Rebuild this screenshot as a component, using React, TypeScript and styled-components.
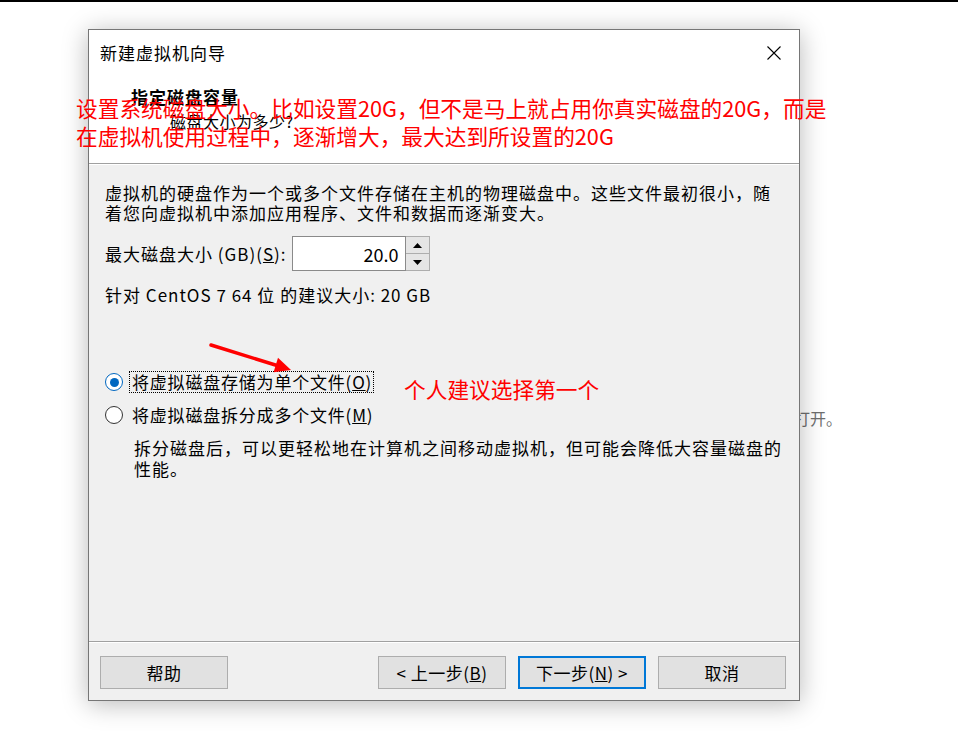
import React from "react";
import styled, { createGlobalStyle } from "styled-components";

const GlobalStyle = createGlobalStyle`
  html, body { margin: 0; padding: 0; background: #fff; }
  body { font-family: "Noto Sans CJK SC", "Noto Sans", sans-serif; color: #000; }
`;

const FONT = `"Noto Sans CJK SC", "Noto Sans", sans-serif`;

const Page = styled.div`
  position: relative;
  width: 958px;
  height: 740px;
  box-sizing: border-box;
  border-top: 2px solid #000;
  padding: 27px 0 0 88px;
  overflow: hidden;
  background: #fff;
`;

const BackText = styled.div`
  position: absolute;
  left: 794px;
  top: 406px;
  z-index: 0;
  font-family: ${FONT};
  font-size: 16px;
  line-height: 20px;
  color: #6e6e6e;
  white-space: nowrap;
`;

const Dialog = styled.div`
  position: relative;
  z-index: 1;
  width: 712px;
  height: 672px;
  box-sizing: border-box;
  border: 1px solid #767676;
  background: #f0f0f0;
  box-shadow: 0 3px 24px rgba(0, 0, 0, 0.28);
  display: flex;
  flex-direction: column;
  font-family: ${FONT};
`;

const TitleBar = styled.div`
  height: 45px;
  background: #fff;
  display: flex;
  align-items: center;
  justify-content: space-between;
  padding: 0 17px 0 11px;
`;

const TitleText = styled.div`
  font-size: 17px;
  letter-spacing: 1px;
  line-height: 22px;
  color: #000;
`;

const CloseIcon = styled.svg`
  width: 16px;
  height: 16px;
  display: block;
`;

const Header = styled.div`
  height: 89px;
  box-sizing: border-box;
  background: #fff;
  border-bottom: 1px solid #a0a0a0;
  padding: 11px 0 0 42px;
`;

const HeaderTitle = styled.div`
  font-size: 17px;
  font-weight: 700;
  letter-spacing: 1px;
  line-height: 22px;
`;

const HeaderSub = styled.div`
  margin: 3px 0 0 39px;
  font-size: 16px;
  letter-spacing: 0.5px;
  line-height: 20px;
`;

const Body = styled.div`
  flex: 1;
  border-top: 1px solid #fff;
  padding: 0 16px;
  display: flex;
  flex-direction: column;
  align-items: flex-start;
`;

const Paragraph = styled.div`
  margin-top: 18px;
  font-size: 17px;
  letter-spacing: 1px;
  line-height: 20px;
  white-space: nowrap;
`;

const SizeRow = styled.div`
  margin-top: 13px;
  height: 35px;
  display: flex;
  align-items: center;
`;

const FieldLabel = styled.span`
  font-size: 17px;
  letter-spacing: 1px;
  line-height: 20px;
  margin-right: 5px;
`;

const Spin = styled.div`
  display: flex;
  height: 35px;
`;

const SpinInput = styled.div`
  width: 114px;
  height: 35px;
  box-sizing: border-box;
  border: 1px solid #8a8a8a;
  background: #fff;
  display: flex;
  align-items: center;
  justify-content: flex-end;
  padding-right: 6px;
  font-size: 18px;
`;

const SpinButtons = styled.div`
  width: 24px;
  display: flex;
  flex-direction: column;
`;

const SpinButton = styled.div`
  flex: 1;
  box-sizing: border-box;
  border: 1px solid #adadad;
  border-left: none;
  background: #e5e5e5;
  display: flex;
  align-items: center;
  justify-content: center;
  & + & { border-top: none; }
`;

const Arrow = styled.svg`
  width: 9px;
  height: 5px;
  display: block;
`;

const Recommend = styled.div`
  margin-top: 14px;
  font-size: 17px;
  letter-spacing: 1px;
  line-height: 20px;
`;

const RadioRow = styled.div<{ $first?: boolean }>`
  margin-top: ${(p) => (p.$first ? "66px" : "11px")};
  height: 22px;
  display: flex;
  align-items: center;
`;

const RadioCircle = styled.div<{ $checked?: boolean }>`
  width: 18px;
  height: 18px;
  box-sizing: border-box;
  border-radius: 50%;
  border: 1px solid ${(p) => (p.$checked ? "#0067c0" : "#333")};
  background: #fff;
  display: flex;
  align-items: center;
  justify-content: center;
  margin-right: 6px;
  &::after {
    content: "";
    display: ${(p) => (p.$checked ? "block" : "none")};
    width: 9px;
    height: 9px;
    border-radius: 50%;
    background: #0067c0;
  }
`;

const RadioLabel = styled.span<{ $focused?: boolean }>`
  font-size: 17px;
  letter-spacing: 0.8px;
  line-height: 20px;
  padding: 0 1px 0 2px;
  border: 1px dotted ${(p) => (p.$focused ? "#000" : "transparent")};
`;

const Description = styled.div`
  margin-top: 11px;
  padding-left: 29px;
  font-size: 17px;
  letter-spacing: 1px;
  line-height: 21px;
  white-space: nowrap;
`;

const Footer = styled.div`
  height: 59px;
  box-sizing: border-box;
  border-top: 1px solid #a0a0a0;
  box-shadow: inset 0 1px 0 #fff;
  padding: 14px 13px 0 11px;
  display: flex;
  align-items: flex-start;
  gap: 12px;
`;

const Button = styled.div<{ $primary?: boolean; $push?: boolean }>`
  width: 128px;
  height: 33px;
  box-sizing: border-box;
  background: #e1e1e1;
  border: ${(p) => (p.$primary ? "2px solid #0078d7" : "1px solid #adadad")};
  display: flex;
  align-items: center;
  justify-content: center;
  font-size: 17px;
  letter-spacing: 0.5px;
  color: #000;
  margin-left: ${(p) => (p.$push ? "auto" : "0")};
`;

const RedNote = styled.div`
  position: absolute;
  left: 76px;
  top: 92px;
  z-index: 3;
  font-family: ${FONT};
  font-size: 21.7px;
  line-height: 28px;
  color: #ff0000;
  white-space: nowrap;
`;

const RedTip = styled(RedNote)`
  left: 404px;
  top: 373px;
`;

const ArrowSvg = styled.svg`
  position: absolute;
  left: 205px;
  top: 333px;
  width: 95px;
  height: 45px;
  z-index: 3;
`;

export default function App() {
  return (
    <>
      <GlobalStyle />
      <Page>
        <BackText>打开。</BackText>
        <Dialog>
          <TitleBar>
            <TitleText>新建虚拟机向导</TitleText>
            <CloseIcon viewBox="0 0 16 16">
              <path d="M1.5 1.5 L14.5 14.5 M14.5 1.5 L1.5 14.5" stroke="#000" strokeWidth="1.1" fill="none" />
            </CloseIcon>
          </TitleBar>
          <Header>
            <HeaderTitle>指定磁盘容量</HeaderTitle>
            <HeaderSub>磁盘大小为多少?</HeaderSub>
          </Header>
          <Body>
            <Paragraph>
              虚拟机的硬盘作为一个或多个文件存储在主机的物理磁盘中。这些文件最初很小，随
              <br />
              着您向虚拟机中添加应用程序、文件和数据而逐渐变大。
            </Paragraph>
            <SizeRow>
              <FieldLabel>
                最大磁盘大小 (GB)(<u>S</u>):
              </FieldLabel>
              <Spin>
                <SpinInput>20.0</SpinInput>
                <SpinButtons>
                  <SpinButton>
                    <Arrow viewBox="0 0 9 5">
                      <path d="M0 5 L4.5 0 L9 5 Z" fill="#000" />
                    </Arrow>
                  </SpinButton>
                  <SpinButton>
                    <Arrow viewBox="0 0 9 5">
                      <path d="M0 0 L9 0 L4.5 5 Z" fill="#000" />
                    </Arrow>
                  </SpinButton>
                </SpinButtons>
              </Spin>
            </SizeRow>
            <Recommend>针对 CentOS 7 64 位 的建议大小: 20 GB</Recommend>
            <RadioRow $first>
              <RadioCircle $checked />
              <RadioLabel $focused>
                将虚拟磁盘存储为单个文件(<u>O</u>)
              </RadioLabel>
            </RadioRow>
            <RadioRow>
              <RadioCircle />
              <RadioLabel>
                将虚拟磁盘拆分成多个文件(<u>M</u>)
              </RadioLabel>
            </RadioRow>
            <Description>
              拆分磁盘后，可以更轻松地在计算机之间移动虚拟机，但可能会降低大容量磁盘的
              <br />
              性能。
            </Description>
          </Body>
          <Footer>
            <Button>帮助</Button>
            <Button $push>
              &lt; 上一步(<u>B</u>)
            </Button>
            <Button $primary>
              下一步(<u>N</u>) &gt;
            </Button>
            <Button>取消</Button>
          </Footer>
        </Dialog>
        <RedNote>
          设置系统磁盘大小。比如设置20G，但不是马上就占用你真实磁盘的20G，而是
          <br />
          在虚拟机使用过程中，逐渐增大，最大达到所设置的20G
        </RedNote>
        <RedTip>个人建议选择第一个</RedTip>
        <ArrowSvg viewBox="0 0 95 45">
          <line x1="6" y1="10" x2="72" y2="30.5" stroke="#ff0000" strokeWidth="3.5" strokeLinecap="round" />
          <polygon points="86,35 68.6,37.2 73,22.8" fill="#ff0000" />
        </ArrowSvg>
      </Page>
    </>
  );
}
